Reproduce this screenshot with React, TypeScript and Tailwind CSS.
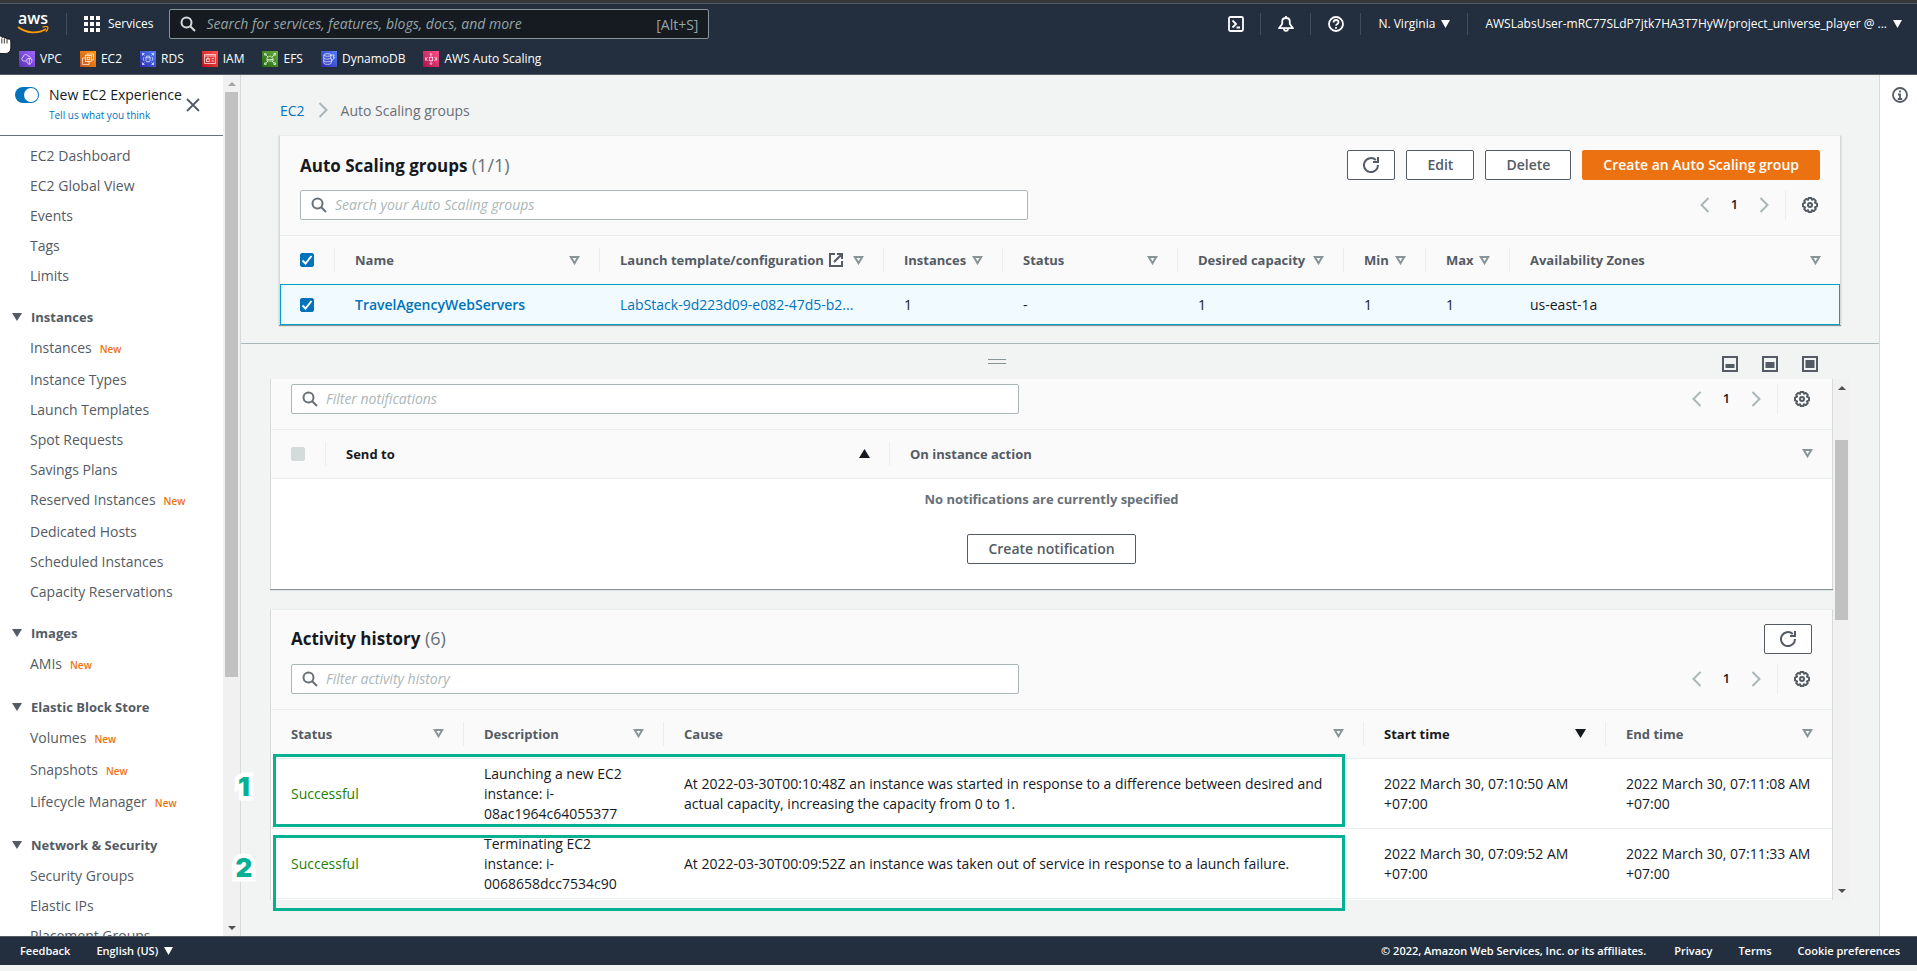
import type { ReactNode } from "react";
import clsx from "clsx";

type SortState = "none" | "asc" | "desc";

const favorites = [
  { label: "VPC", color: "from-[#5a30b5] to-[#a166ff]", icon: "vpc" },
  { label: "EC2", color: "from-[#c8511b] to-[#ff9900]", icon: "ec2" },
  { label: "RDS", color: "from-[#2e27ad] to-[#527fff]", icon: "rds" },
  { label: "IAM", color: "from-[#bd0816] to-[#ff5252]", icon: "iam" },
  { label: "EFS", color: "from-[#1b660f] to-[#6cae3e]", icon: "efs" },
  { label: "DynamoDB", color: "from-[#2e27ad] to-[#527fff]", icon: "dynamo" },
  { label: "AWS Auto Scaling", color: "from-[#b0084d] to-[#ff4f8b]", icon: "scaling" },
];

const navSections = [
  {
    title: "",
    items: [
      { label: "EC2 Dashboard" },
      { label: "EC2 Global View" },
      { label: "Events" },
      { label: "Tags" },
      { label: "Limits" },
    ],
  },
  {
    title: "Instances",
    items: [
      { label: "Instances", isNew: true },
      { label: "Instance Types" },
      { label: "Launch Templates" },
      { label: "Spot Requests" },
      { label: "Savings Plans" },
      { label: "Reserved Instances", isNew: true },
      { label: "Dedicated Hosts" },
      { label: "Scheduled Instances" },
      { label: "Capacity Reservations" },
    ],
  },
  { title: "Images", items: [{ label: "AMIs", isNew: true }] },
  {
    title: "Elastic Block Store",
    items: [
      { label: "Volumes", isNew: true },
      { label: "Snapshots", isNew: true },
      { label: "Lifecycle Manager", isNew: true },
    ],
  },
  {
    title: "Network & Security",
    items: [{ label: "Security Groups" }, { label: "Elastic IPs" }, { label: "Placement Groups" }],
  },
];

const activities = [
  {
    description: ["Launching a new EC2", "instance: i-", "08ac1964c64055377"],
    cause:
      "At 2022-03-30T00:10:48Z an instance was started in response to a difference between desired and actual capacity, increasing the capacity from 0 to 1.",
    start: "2022 March 30, 07:10:50 AM",
    end: "2022 March 30, 07:11:08 AM",
  },
  {
    description: ["Terminating EC2", "instance: i-", "0068658dcc7534c90"],
    cause:
      "At 2022-03-30T00:09:52Z an instance was taken out of service in response to a launch failure.",
    start: "2022 March 30, 07:09:52 AM",
    end: "2022 March 30, 07:11:33 AM",
  },
];

/* ---------- Icons ---------- */

function ServiceGlyph({ name }: { name: string }) {
  return (
    <svg viewBox="0 0 16 16" className="size-4" fill="none" stroke="#fff" strokeWidth="0.7">
      {name === "vpc" && (
        <>
          <path d="M7 10H4.6a2 2 0 0 1-.4-3.9C4.3 4 6 3.2 7.4 3.6c1 .2 1.6.9 1.9 1.7 1.2-.2 2 .4 2.2 1.3" />
          <path d="M10.3 7.2l2.500.8v2.300c0 1.500-1 2.400-2.500 3-1.500-.6-2.500-1.500-2.500-3V8zM10.300 7.200v6" />
        </>
      )}
      {name === "ec2" && (
        <>
          <rect x="5.5" y="4.5" width="6" height="6" />
          <rect x="7.2" y="6.2" width="2.6" height="2.6" />
          <path d="M7 4.500V3h6.500v6H12M5.500 7H2.500v6.500H9v-3" />
        </>
      )}
      {name === "rds" && (
        <>
          <path d="m2.500 2.500 2 2m9-2-2 2m-9 9 2-2m9 2-2-2M2.500 4.500v-2h2m7 0h2v2m0 7v2h-2m-7 0h-2v-2" />
          <ellipse cx="8" cy="6" rx="2" ry="0.9" />
          <path d="M6 6v4c0 1.200 4 1.200 4 0V6M4 6.200 3 8l1 1.800M12 6.200 13 8l-1 1.800" />
        </>
      )}
      {name === "iam" && (
        <>
          <path d="M2.500 3.500h11v9h-11zM2.500 5h11" />
          <rect x="4.5" y="8" width="3" height="2.5" />
          <path d="M5.200 8V7h1.600v1M9.500 7.500h2.500M9.500 10h2.500" />
        </>
      )}
      {name === "efs" && (
        <>
          <path d="M2.500 2.500h1.600v1.600H2.500zm9.400 0h1.600v1.600h-1.600zm-9.400 9.400h1.600v1.600H2.500zm9.400 0h1.600v1.600h-1.600zM4.100 4.100 6 6m6-2-2 2m-5.900 6L6 10m6 2-2-2" />
          <path d="M5 10V7.500c0-1 .8-1.800 1.600-1.500.7-1.500 3-1 3 .5 1 0 1.500.6 1.500 1.500v2zM5 8.500h6" />
        </>
      )}
      {name === "dynamo" && (
        <>
          <ellipse cx="6.5" cy="4" rx="3.7" ry="1.3" />
          <path d="M2.800 4v8c0 1.800 7.400 1.800 7.400 0v-1.500M2.800 6.700c0 1.500 4 1.800 6 1M2.800 9.400c0 1.500 4 1.800 6 1" />
          <path d="M10.200 4h3l-1 2.300h1.500L10 11l.7-3.200H9.300z" />
        </>
      )}
      {name === "scaling" && (
        <>
          <path d="M8 2.500v3M6.800 3.700 8 2.500l1.200 1.200M8 13.500v-3m-1.200 1.800L8 13.500l1.200-1.200M2.500 6.500v3M4.500 6 2.800 8l1.700 2m9-3.500v3M11.500 6l1.700 2-1.700 2" />
          <rect x="6.3" y="6.3" width="3.4" height="3.4" />
        </>
      )}
    </svg>
  );
}

function SearchIcon({ className }: { className?: string }) {
  return (
    <svg viewBox="0 0 16 16" className={clsx("size-4", className)} fill="none" stroke="currentColor" strokeWidth="2">
      <circle cx="6.5" cy="6.5" r="5" />
      <path d="m10.200 10.200 4.800 4.800" />
    </svg>
  );
}

function SortIcon({ state = "none" }: { state?: SortState }) {
  if (state === "asc") {
    return (
      <svg viewBox="0 0 11 9" className="h-[9px] w-[11px] shrink-0" fill="#16191f">
        <path d="M5.500 0 11 9H0z" />
      </svg>
    );
  }
  if (state === "desc") {
    return (
      <svg viewBox="0 0 11 9" className="h-[9px] w-[11px] shrink-0" fill="#16191f">
        <path d="M0 0h11L5.500 9z" />
      </svg>
    );
  }
  return (
    <svg viewBox="0 0 11 9" className="h-[9px] w-[11px] shrink-0" fill="none" stroke="#879596" strokeWidth="2">
      <path d="M1.800 1h7.400L5.500 7.200z" />
    </svg>
  );
}

function RefreshIcon() {
  return (
    <svg viewBox="0 0 16 16" className="size-4" fill="none" stroke="currentColor" strokeWidth="2">
      <path d="M15 8a7 7 0 1 1-2.200-5" />
      <path d="M10 5h5V0" />
    </svg>
  );
}

function GearIcon() {
  return (
    <svg viewBox="0 0 16 16" className="size-4" fill="none" stroke="currentColor" strokeWidth="2" strokeLinejoin="round">
      <path d="M6.600 1h2.800l.5 1.800 1.900-.9 2 2-.9 1.800 2.100.9v2.800l-2.100.9.9 1.800-2 2-1.900-.9L9.400 15H6.600l-.5-1.800-1.900.9-2-2 .9-1.800L1 9.400V6.600l2.100-.9-.9-1.800 2-2 1.900.9z" />
      <circle cx="8" cy="8" r="2" />
    </svg>
  );
}

function ChevronIcon({ direction }: { direction: "left" | "right" }) {
  return (
    <svg viewBox="0 0 16 16" className="size-4" fill="none" stroke="#aab7b8" strokeWidth="2">
      <path d={direction === "left" ? "m11.500 1-7 7 7 7" : "m4.500 1 7 7-7 7"} />
    </svg>
  );
}

function Caret({ className }: { className?: string }) {
  return (
    <svg viewBox="0 0 10 8" preserveAspectRatio="none" className={clsx("shrink-0", className)} fill="currentColor">
      <path d="M0 0h10L5 8z" />
    </svg>
  );
}

/* ---------- Shared controls ---------- */

function Checkbox({ label, checked, disabled }: { label: string; checked?: boolean; disabled?: boolean }) {
  return (
    <span className="relative block size-3.5">
      <input
        type="checkbox"
        aria-label={label}
        defaultChecked={checked}
        disabled={disabled}
        className="peer block size-3.5 appearance-none rounded-[2px] border border-[#687078] bg-white checked:border-[#0073bb] checked:bg-[#0073bb] disabled:border-[#d5dbdb] disabled:bg-[#d5dbdb]"
      />
      <svg
        viewBox="0 0 14 14"
        className="pointer-events-none absolute inset-0 hidden size-3.5 peer-checked:block"
        fill="none"
        stroke="#fff"
        strokeWidth="2"
      >
        <path d="m2.500 7.500 3 3 6-7.500" />
      </svg>
    </span>
  );
}

function Button({ children, primary, label }: { children: ReactNode; primary?: boolean; label?: string }) {
  return (
    <button
      type="button"
      aria-label={label}
      className={clsx(
        "flex h-[30px] items-center justify-center rounded-[2px] border text-[14px] leading-5 font-semibold",
        label ? "w-12" : "px-5",
        primary ? "border-[#ec7211] bg-[#ec7211] text-white" : "border-[#545b64] bg-white text-[#545b64]"
      )}
    >
      {children}
    </button>
  );
}

function FilterRow({ placeholder }: { placeholder: string }) {
  return (
    <div className="flex items-center justify-between">
      <label className="flex h-[30px] w-[728px] items-center gap-2 rounded-[2px] border border-[#aab7b8] bg-white px-2.5">
        <SearchIcon className="text-[#687078]" />
        <input
          type="search"
          aria-label={placeholder}
          placeholder={placeholder}
          className="min-w-0 flex-1 bg-transparent text-[14px] leading-5 outline-none placeholder:text-[#aab7b8] placeholder:italic"
        />
      </label>
      <div className="flex h-[30px] items-center text-[#545b64]">
        <button type="button" aria-label="Previous page">
          <ChevronIcon direction="left" />
        </button>
        <span className="w-[43px] text-center text-[13px] font-semibold text-[#16191f]">1</span>
        <button type="button" aria-label="Next page" className="mr-[13px]">
          <ChevronIcon direction="right" />
        </button>
        <button type="button" aria-label="Preferences" className="h-[30px] border-l border-[#eaeded] pr-0.5 pl-4">
          <GearIcon />
        </button>
      </div>
    </div>
  );
}

function HeaderCell({
  children,
  sort = "none",
  last,
}: {
  children: ReactNode;
  sort?: SortState;
  last?: boolean;
}) {
  return (
    <th scope="col" className="p-0 text-left">
      <div
        className={clsx(
          "flex h-6 items-center justify-between pr-[19px] pl-5 text-[13px] font-bold whitespace-nowrap",
          !last && "border-r border-[#eaeded]",
          sort === "none" ? "text-[#545b64]" : "text-[#16191f]"
        )}
      >
        <span className="flex items-center gap-1">{children}</span>
        <SortIcon state={sort} />
      </div>
    </th>
  );
}

function CheckHeader({ checked, disabled }: { checked?: boolean; disabled?: boolean }) {
  return (
    <th scope="col" className="p-0">
      <div className="flex h-6 items-center border-r border-[#eaeded] pl-5">
        <Checkbox label="Select all" checked={checked} disabled={disabled} />
      </div>
    </th>
  );
}

/* ---------- Page parts ---------- */

function TopBar() {
  return (
    <header className="shrink-0 border-t border-b border-[#545b64] bg-[#232f3e] text-[12px] text-white">
      <div className="flex h-10 items-center">
        <a href="#home" aria-label="AWS home" className="ml-[17px] flex w-8 flex-col items-center pb-1">
          <span className="text-[16px] leading-[15px] font-semibold">aws</span>
          <svg viewBox="0 0 32 8" className="h-2 w-8" fill="none" stroke="#ff9900" strokeWidth="1.8">
            <path d="M1 1c8 6.500 20 7 28 2" />
            <path d="M25.500 1.200c3-1 5-.8 5.300 0 .3 1-.5 3-2 4.500" strokeWidth="1.3" />
          </svg>
        </a>
        <span className="ml-[17px] h-[22px] w-px bg-[#414d5c]" />
        <button type="button" className="ml-[17px] flex items-center gap-2 font-medium">
          <svg viewBox="0 0 16 16" className="size-4" fill="currentColor">
            {[0, 6, 12].map((y) =>
              [0, 6, 12].map((x) => <rect key={`${x}-${y}`} x={x} y={y} width="4" height="4" />)
            )}
          </svg>
          Services
        </button>
        <label className="ml-4 flex h-[30px] w-[540px] items-center gap-2.5 rounded-[2px] border border-[#879596] bg-[#161a21] px-2.5">
          <SearchIcon className="text-[#d5dbdb]" />
          <input
            type="search"
            aria-label="Search"
            placeholder="Search for services, features, blogs, docs, and more"
            className="min-w-0 flex-1 bg-transparent text-[14px] leading-5 outline-none placeholder:text-[#95a5a6] placeholder:italic"
          />
          <span className="text-[14px] text-[#95a5a6]">[Alt+S]</span>
        </label>
        <div className="ml-auto flex items-center">
          <button type="button" aria-label="CloudShell" className="h-[22px] border-r border-[#414d5c] px-4">
            <svg viewBox="0 0 16 16" className="size-4" fill="none" stroke="currentColor" strokeWidth="1.8">
              <rect x="1" y="1" width="14" height="14" rx="1.5" />
              <path d="m4.500 4.500 3.500 3.500-3.500 3.500M8.500 11.500H12" />
            </svg>
          </button>
          <button type="button" aria-label="Notifications" className="h-[22px] border-r border-[#414d5c] pr-4 pl-[17px]">
            <svg viewBox="0 0 16 16" className="size-4" fill="none" stroke="currentColor" strokeWidth="1.8" strokeLinejoin="round">
              <path d="M8 0v2M1 12.200h14L11.800 8V5.500C11.800 3.300 10 2 8 2S4.200 3.300 4.200 5.500V8z" />
              <path d="M6 12.500c0 3.200 4 3.200 4 0" />
            </svg>
          </button>
          <button type="button" aria-label="Help" className="h-[22px] border-r border-[#414d5c] pr-4 pl-[17px]">
            <svg viewBox="0 0 16 16" className="size-4" fill="none" stroke="currentColor" strokeWidth="1.8">
              <circle cx="8" cy="8" r="7" />
              <path d="M5.500 6.500c0-3.300 5-3.300 5-.3C10.500 8 8 7.800 8 9.800M8 11v1.800" />
            </svg>
          </button>
          <button type="button" className="flex h-[22px] items-center gap-1.5 border-r border-[#414d5c] px-[17px] font-medium">
            N. Virginia
            <Caret className="h-2 w-[9px]" />
          </button>
          <button type="button" className="flex h-[22px] items-center gap-1.5 pr-[15px] pl-[17px] font-medium">
            AWSLabsUser-mRC77SLdP7jtk7HA3T7HyW/project_universe_player @ ...
            <Caret className="h-2 w-[9px]" />
          </button>
        </div>
      </div>
      <nav className="flex h-[30px] items-start gap-[18px] pt-[7px] pl-[19px]">
        {favorites.map((item) => (
          <a key={item.label} href={`#${item.icon}`} className="flex h-4 items-center gap-[5px] font-medium">
            <span className={clsx("bg-linear-to-tr", item.color)}>
              <ServiceGlyph name={item.icon} />
            </span>
            {item.label}
          </a>
        ))}
      </nav>
    </header>
  );
}

function Sidebar() {
  return (
    <aside className="flex w-[241px] shrink-0 border-r border-[#d5dbdb] bg-white">
      <div className="flex min-w-0 flex-1 flex-col overflow-hidden">
        <div className="flex h-[61px] shrink-0 items-start border-b border-[#687078] pt-2.5 pl-[15px]">
          <input
            id="new-experience"
            type="checkbox"
            role="switch"
            defaultChecked
            className="mt-0.5 flex h-4 w-6 shrink-0 appearance-none items-center rounded-full bg-[#879596] px-px before:size-3.5 before:rounded-full before:bg-white checked:justify-end checked:bg-[#0073bb]"
          />
          <div className="ml-2.5 w-[130px] whitespace-nowrap">
            <label htmlFor="new-experience" className="block text-[14px] leading-5 text-[#16191f]">
              New EC2 Experience
            </label>
            <a href="#feedback" className="block text-[10px] leading-5 text-[#0073bb]">
              Tell us what you think
            </a>
          </div>
          <button type="button" aria-label="Close" className="mt-3 ml-1.5 text-[#545b64]">
            <svg viewBox="0 0 16 16" className="size-4" fill="none" stroke="currentColor" strokeWidth="1.8">
              <path d="m2 2 12 12M14 2 2 14" />
            </svg>
          </button>
        </div>
        <nav className="pt-[5px] text-[14px] leading-5 text-[#545b64]">
          {navSections.map((section) => (
            <div key={section.title}>
              {section.title && (
                <button type="button" className="flex h-[42px] items-center gap-[9px] pt-2.5 pl-3 text-[13px] font-bold">
                  <Caret className="h-2 w-2.5" />
                  {section.title}
                </button>
              )}
              <ul>
                {section.items.map((item) => (
                  <li key={item.label} className={clsx("pt-[5px] pl-[30px]", "isNew" in item ? "h-8" : "h-[30px]")}>
                    <a href="#nav">{item.label}</a>
                    {"isNew" in item && <span className="ml-2 text-[10px] font-semibold text-[#ec7211]">New</span>}
                  </li>
                ))}
              </ul>
            </div>
          ))}
        </nav>
      </div>
      <div className="flex w-[17px] flex-col items-center bg-[#f1f1f1] pt-[7px] pb-1.5">
        <Caret className="h-1 w-2 rotate-180 text-[#a3a3a3]" />
        <div className="mt-1.5 h-[585px] w-[13px] bg-[#c1c1c1]" />
        <Caret className="mt-auto h-1 w-2 text-[#505050]" />
      </div>
    </aside>
  );
}

function GroupsCard() {
  return (
    <section className="mx-[38px] border border-b-0 border-[#d5dbdb] border-t-[#eaeded] bg-[#fafafa] shadow-[0_1px_1px_#879596]">
      <div className="border-b border-[#eaeded] px-5 pt-3.5 pb-[15px]">
        <div className="mb-2.5 flex items-center justify-between">
          <h1 className="text-[17px] leading-6 font-bold text-[#16191f]">
            Auto Scaling groups <span className="text-[18px] font-normal text-[#687078]">(1/1)</span>
          </h1>
          <div className="flex gap-[11px]">
            <Button label="Refresh">
              <RefreshIcon />
            </Button>
            <Button>Edit</Button>
            <Button>Delete</Button>
            <Button primary>Create an Auto Scaling group</Button>
          </div>
        </div>
        <FilterRow placeholder="Search your Auto Scaling groups" />
      </div>
      <table className="w-full table-fixed border-collapse text-[14px] leading-5">
        <colgroup>
          <col className="w-[55px]" />
          <col className="w-[265px]" />
          <col className="w-[284px]" />
          <col className="w-[119px]" />
          <col className="w-[175px]" />
          <col className="w-[166px]" />
          <col className="w-[82px]" />
          <col className="w-[84px]" />
          <col />
        </colgroup>
        <thead>
          <tr className="h-12">
            <CheckHeader checked />
            <HeaderCell>Name</HeaderCell>
            <HeaderCell>
              Launch template/configuration
              <svg viewBox="0 0 16 16" className="size-4 shrink-0" fill="none" stroke="currentColor" strokeWidth="2">
                <path d="M7 2H2v12h12V9M9 2h5v5M14 2 6 10" />
              </svg>
            </HeaderCell>
            <HeaderCell>Instances</HeaderCell>
            <HeaderCell>Status</HeaderCell>
            <HeaderCell>Desired capacity</HeaderCell>
            <HeaderCell>Min</HeaderCell>
            <HeaderCell>Max</HeaderCell>
            <HeaderCell last>Availability Zones</HeaderCell>
          </tr>
        </thead>
        <tbody>
          <tr className="h-[41px] bg-[#f1faff] text-[#16191f] outline -outline-offset-1 outline-[#00a1c9]">
            <td className="pl-5">
              <Checkbox label="Select TravelAgencyWebServers" checked />
            </td>
            <td className="pl-5">
              <a href="#group" className="font-semibold text-[#0073bb]">
                TravelAgencyWebServers
              </a>
            </td>
            <td className="pl-5 whitespace-nowrap">
              <a href="#template" className="text-[#0073bb]">
                LabStack-9d223d09-e082-47d5-b2...
              </a>
            </td>
            <td className="pl-5">1</td>
            <td className="pl-5">-</td>
            <td className="pl-5">1</td>
            <td className="pl-5">1</td>
            <td className="pl-5">1</td>
            <td className="pl-5">us-east-1a</td>
          </tr>
        </tbody>
      </table>
    </section>
  );
}

function SplitHeader() {
  return (
    <div className="mt-[18px] flex h-9 shrink-0 items-center border-t border-[#aab7b8] pr-[61px] pl-[747px]">
      <button type="button" aria-label="Resize panel" className="flex w-[18px] flex-col gap-[3px]">
        <span className="h-px bg-[#879596]" />
        <span className="h-px bg-[#879596]" />
      </button>
      <div className="ml-auto flex gap-6 pt-1 text-[#545b64]">
        {[
          { label: "Small panel", y: 8, height: 4 },
          { label: "Medium panel", y: 6, height: 6 },
          { label: "Full panel", y: 4, height: 8 },
        ].map((panel) => (
          <button key={panel.label} type="button" aria-label={panel.label}>
            <svg viewBox="0 0 16 16" className="size-4">
              <rect x="1" y="1" width="14" height="14" fill="none" stroke="currentColor" strokeWidth="2" />
              <rect x="3.5" y={panel.y} width="9" height={panel.height} fill="currentColor" />
            </svg>
          </button>
        ))}
      </div>
    </div>
  );
}

function NotificationsCard() {
  return (
    <section className="border-x border-[#d5dbdb] bg-[#fafafa] shadow-[0_1px_1px_#879596]">
      <div className="border-b border-[#eaeded] px-5 pt-[5px] pb-[15px]">
        <FilterRow placeholder="Filter notifications" />
      </div>
      <table className="w-full table-fixed border-collapse text-[13px] leading-5">
        <colgroup>
          <col className="w-[55px]" />
          <col className="w-[564px]" />
          <col />
        </colgroup>
        <thead>
          <tr className="h-12 border-b border-[#eaeded]">
            <CheckHeader disabled />
            <HeaderCell sort="asc">Send to</HeaderCell>
            <HeaderCell last>On instance action</HeaderCell>
          </tr>
        </thead>
        <tbody>
          <tr className="bg-white">
            <td colSpan={3} className="pt-2.5 pb-[25px] text-center font-bold text-[#687078]">
              <p className="mb-[25px]">No notifications are currently specified</p>
              <div className="flex justify-center">
                <Button>Create notification</Button>
              </div>
            </td>
          </tr>
        </tbody>
      </table>
    </section>
  );
}

function ActivityCard() {
  return (
    <section className="mt-5 border-x border-t border-[#d5dbdb] border-t-[#eaeded] bg-[#fafafa]">
      <div className="border-b border-[#eaeded] px-5 pt-3.5 pb-[15px]">
        <div className="mb-2.5 flex items-center justify-between">
          <h2 className="text-[17px] leading-6 font-bold text-[#16191f]">
            Activity history <span className="text-[18px] font-normal text-[#687078]">(6)</span>
          </h2>
          <Button label="Refresh activity">
            <RefreshIcon />
          </Button>
        </div>
        <FilterRow placeholder="Filter activity history" />
      </div>
      <table className="w-full table-fixed border-collapse text-[14px] leading-5 text-[#16191f]">
        <colgroup>
          <col className="w-[193px]" />
          <col className="w-[200px]" />
          <col />
          <col className="w-[242px]" />
          <col className="w-[226px]" />
        </colgroup>
        <thead>
          <tr className="h-[49px] border-b border-[#eaeded]">
            <HeaderCell>Status</HeaderCell>
            <HeaderCell>Description</HeaderCell>
            <HeaderCell>Cause</HeaderCell>
            <HeaderCell sort="desc">Start time</HeaderCell>
            <HeaderCell last>End time</HeaderCell>
          </tr>
        </thead>
        <tbody>
          {activities.map((activity) => (
            <tr key={activity.start} className="h-[70px] border-b border-[#eaeded] bg-white">
              <td className="pl-5 text-[#1d8102]">Successful</td>
              <td className="pl-5 whitespace-nowrap">
                {activity.description.map((line) => (
                  <div key={line}>{line}</div>
                ))}
              </td>
              <td className="pr-10 pl-5">{activity.cause}</td>
              <td className="pl-5 whitespace-nowrap">
                {activity.start}
                <br />
                +07:00
              </td>
              <td className="pl-5 whitespace-nowrap">
                {activity.end}
                <br />
                +07:00
              </td>
            </tr>
          ))}
        </tbody>
      </table>
      <div className="h-5 bg-white" />
    </section>
  );
}

/* Green callout boxes lying over the activity rows */
function Callout({ step, className }: { step: string; className: string }) {
  return (
    <div className={clsx("pointer-events-none absolute right-[534px] left-8 z-10 border-[3px] border-[#06b193]", className)}>
      <span className="absolute top-[30px] right-full mr-[22px] w-5 -translate-y-1/2 text-center font-['Inter'] text-[26px] leading-7 font-black text-[#06b193] [-webkit-text-stroke:9px_white] [paint-order:stroke_fill]">
        {step}
      </span>
    </div>
  );
}

export default function App() {
  return (
    <div className="flex h-screen flex-col overflow-hidden bg-[#f2f3f3] font-['Open_Sans','Noto_Sans',sans-serif]">
      <div className="h-[3px] shrink-0 bg-[#38383b]" />
      <TopBar />
      <div className="flex min-h-0 flex-1">
        <Sidebar />
        <main className="relative flex min-w-0 flex-1 flex-col">
          <nav aria-label="Breadcrumb" className="flex h-[60px] shrink-0 items-center gap-2.5 pt-2.5 pl-[39px] text-[14px]">
            <a href="#ec2" className="text-[#0073bb]">
              EC2
            </a>
            <ChevronIcon direction="right" />
            <span className="text-[#687078]">Auto Scaling groups</span>
          </nav>
          <GroupsCard />
          <SplitHeader />
          <div className="mr-[29px] mb-9 ml-[29px] flex min-h-0 flex-1">
            <div className="min-w-0 flex-1 overflow-hidden">
              <NotificationsCard />
              <ActivityCard />
            </div>
            <div className="flex w-[17px] flex-col items-center bg-[#f1f1f1] py-[7px]">
              <Caret className="h-1 w-2 rotate-180 text-[#505050]" />
              <div className="mt-[50px] h-[180px] w-[13px] bg-[#c1c1c1]" />
              <Caret className="mt-auto h-1 w-2 text-[#505050]" />
            </div>
          </div>
          <Callout step="1" className="top-[679px] h-[73px]" />
          <Callout step="2" className="top-[760px] h-[76px]" />
        </main>
        <aside className="w-[38px] shrink-0 border-l border-[#d5dbdb] bg-white pt-3 pl-3">
          <button type="button" aria-label="Info" className="block text-[#545b64]">
            <svg viewBox="0 0 16 16" className="size-4" fill="none" stroke="currentColor" strokeWidth="1.8">
              <circle cx="8" cy="8" r="7" />
              <path d="M8 3.500v2M6 7.500h2V12M5.800 12h4.400" />
            </svg>
          </button>
        </aside>
      </div>
      <footer className="mb-1.5 flex h-[29px] shrink-0 items-center border-t border-[#545b64] bg-[#232f3e] pr-[17px] pl-5 text-[11px] font-semibold text-white">
        <button type="button">Feedback</button>
        <button type="button" className="ml-[26px] flex items-center gap-1.5">
          English (US)
          <Caret className="h-2 w-[9px]" />
        </button>
        <span className="ml-auto">© 2022, Amazon Web Services, Inc. or its affiliates.</span>
        <a href="#privacy" className="ml-7">
          Privacy
        </a>
        <a href="#terms" className="ml-[26px]">
          Terms
        </a>
        <a href="#cookies" className="ml-[26px]">
          Cookie preferences
        </a>
      </footer>
      {/* Mouse pointer */}
      <svg viewBox="0 0 12 22" className="pointer-events-none absolute top-8 left-0 h-[22px] w-3" fill="#fff" stroke="#000" strokeWidth="0.8">
        <path d="M-5 1c0-1.500 2.500-1.500 2.500 0L2 5.500c1-1 2.300-.3 2.300.8 1-.8 2.500-.2 2.500 1 1.500-.6 4 0 4 1.700V16c0 3-2 5.500-5 5.500H1c-3 0-6-4-6-8z" />
        <path d="M1.800 6.500v5M4.300 7v4.500M7 8v3.500" />
      </svg>
    </div>
  );
}
